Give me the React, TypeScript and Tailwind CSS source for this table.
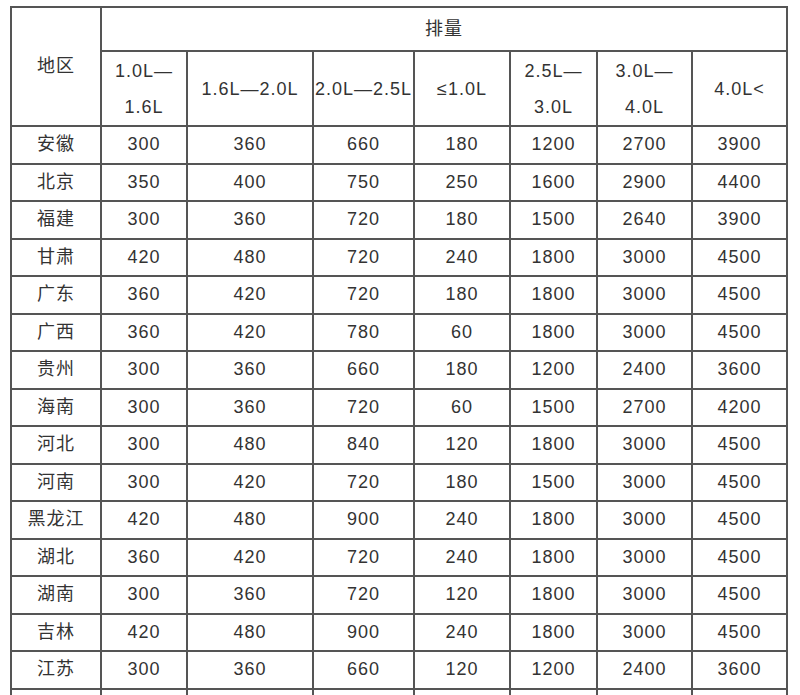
const rows: [string, ...number[]][] = [
  ["安徽", 300, 360, 660, 180, 1200, 2700, 3900],
  ["北京", 350, 400, 750, 250, 1600, 2900, 4400],
  ["福建", 300, 360, 720, 180, 1500, 2640, 3900],
  ["甘肃", 420, 480, 720, 240, 1800, 3000, 4500],
  ["广东", 360, 420, 720, 180, 1800, 3000, 4500],
  ["广西", 360, 420, 780, 60, 1800, 3000, 4500],
  ["贵州", 300, 360, 660, 180, 1200, 2400, 3600],
  ["海南", 300, 360, 720, 60, 1500, 2700, 4200],
  ["河北", 300, 480, 840, 120, 1800, 3000, 4500],
  ["河南", 300, 420, 720, 180, 1500, 3000, 4500],
  ["黑龙江", 420, 480, 900, 240, 1800, 3000, 4500],
  ["湖北", 360, 420, 720, 240, 1800, 3000, 4500],
  ["湖南", 300, 360, 720, 120, 1800, 3000, 4500],
  ["吉林", 420, 480, 900, 240, 1800, 3000, 4500],
  ["江苏", 300, 360, 660, 120, 1200, 2400, 3600],
]

const cols = [90, 86, 126, 101, 96, 87, 95, 95]

const cell = "border-2 border-[#555] text-center p-0 font-normal"

export default function App() {
  return (
    <div
      className="h-[695px] overflow-hidden bg-white pl-[10px] pt-[6px] text-[18px] tracking-[1px] text-[#333]"
      style={{ fontFamily: '"Liberation Sans", "Noto Sans CJK SC", sans-serif' }}
    >
      <table className="table-fixed border-collapse w-[778px]">
        <colgroup>
          {cols.map((w, i) => (
            <col key={i} style={{ width: w }} />
          ))}
        </colgroup>
        <thead>
          <tr className="h-[44px]">
            <th rowSpan={2} className={cell}>地区</th>
            <th colSpan={7} className={cell}>排量</th>
          </tr>
          <tr className="h-[75px] leading-[36px]">
            <th className={cell}>1.0L—<br />1.6L</th>
            <th className={cell}>1.6L—2.0L</th>
            <th className={`${cell} whitespace-nowrap`}>2.0L—2.5L</th>
            <th className={cell}>≤1.0L</th>
            <th className={cell}>2.5L—<br />3.0L</th>
            <th className={cell}>3.0L—<br />4.0L</th>
            <th className={cell}>4.0L&lt;</th>
          </tr>
        </thead>
        <tbody>
          {rows.map(([region, ...vals]) => (
            <tr key={region} className="h-[37.5px]">
              <td className={cell}>{region}</td>
              {vals.map((v, i) => (
                <td key={i} className={cell}>{v}</td>
              ))}
            </tr>
          ))}
          <tr className="h-[37.5px]">
            {cols.map((_, i) => (
              <td key={i} className={cell}></td>
            ))}
          </tr>
        </tbody>
      </table>
    </div>
  )
}
